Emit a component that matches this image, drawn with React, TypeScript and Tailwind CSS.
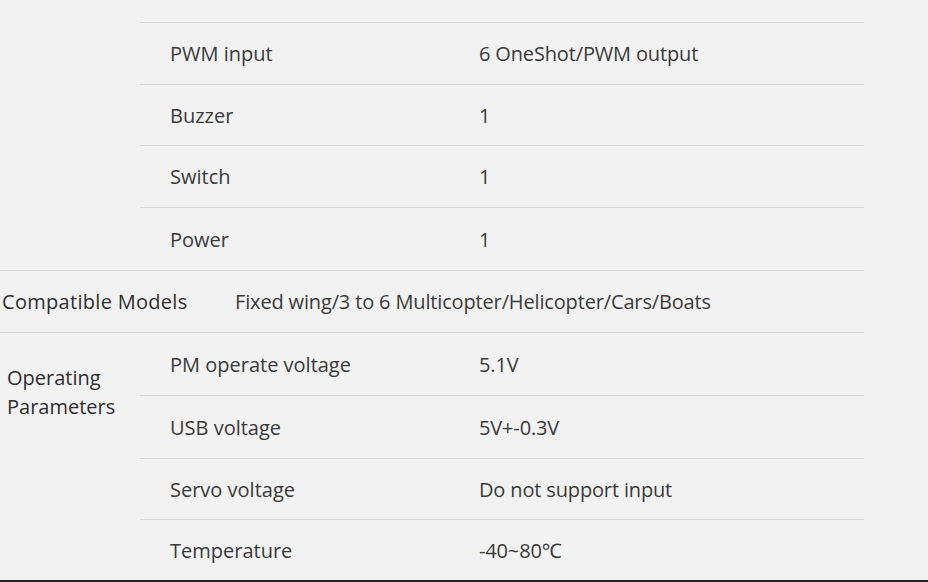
type Row = { label: string; value: string; h: string; border?: boolean };

const topRows: Row[] = [
  { label: "ADC", value: "1", h: "h-[62px]", border: true },
  { label: "PWM input", value: "6 OneShot/PWM output", h: "h-[62px]", border: true },
  { label: "Buzzer", value: "1", h: "h-[61px]", border: true },
  { label: "Switch", value: "1", h: "h-[62px]", border: true },
  { label: "Power", value: "1", h: "h-[62px]" },
];

const opRows: Row[] = [
  { label: "PM operate voltage", value: "5.1V", h: "h-[63px]", border: true },
  { label: "USB voltage", value: "5V+-0.3V", h: "h-[63px]", border: true },
  { label: "Servo voltage", value: "Do not support input", h: "h-[61px]", border: true },
  { label: "Temperature", value: "-40~80℃", h: "h-[60px]" },
];

function SubRow({ row }: { row: Row }) {
  return (
    <div
      className={`flex items-center ${row.h} ${row.border ? "border-b border-[#d9d9d9]" : ""}`}
    >
      <div className="w-[324px] pl-[30px]">{row.label}</div>
      <div className="pl-[15px] tracking-[-0.15px]">{row.value}</div>
    </div>
  );
}

export default function App() {
  return (
    <div
      className="h-[582px] w-[928px] overflow-hidden bg-[#f2f2f2] text-[20px] leading-[29px] text-[#3a3a3a]"
      style={{ fontFamily: '"Open Sans", "Noto Sans", sans-serif' }}
    >
      <div className="mt-[-39px] w-[864px]">
        <div className="flex border-b border-[#d9d9d9]">
          <div className="w-[140px]" />
          <div className="flex-1">
            {topRows.map((r) => (
              <SubRow key={r.label} row={r} />
            ))}
          </div>
        </div>

        <div className="flex h-[62px] items-center border-b border-[#d9d9d9] text-[#2e2e2e]">
          <div className="w-[235px] pl-[2px] font-medium tracking-[0.3px]">Compatible Models</div>
          <div className="tracking-[-0.15px] text-[#3a3a3a]">
            Fixed wing/3 to 6 Multicopter/Helicopter/Cars/Boats
          </div>
        </div>

        <div className="flex">
          <div className="w-[140px] pl-[7px] pt-[30px] font-medium text-[#2e2e2e]">
            Operating
            <br />
            Parameters
          </div>
          <div className="flex-1">
            {opRows.map((r) => (
              <SubRow key={r.label} row={r} />
            ))}
          </div>
        </div>
      </div>
      <div className="h-[3px] bg-[#222222]" />
    </div>
  );
}
